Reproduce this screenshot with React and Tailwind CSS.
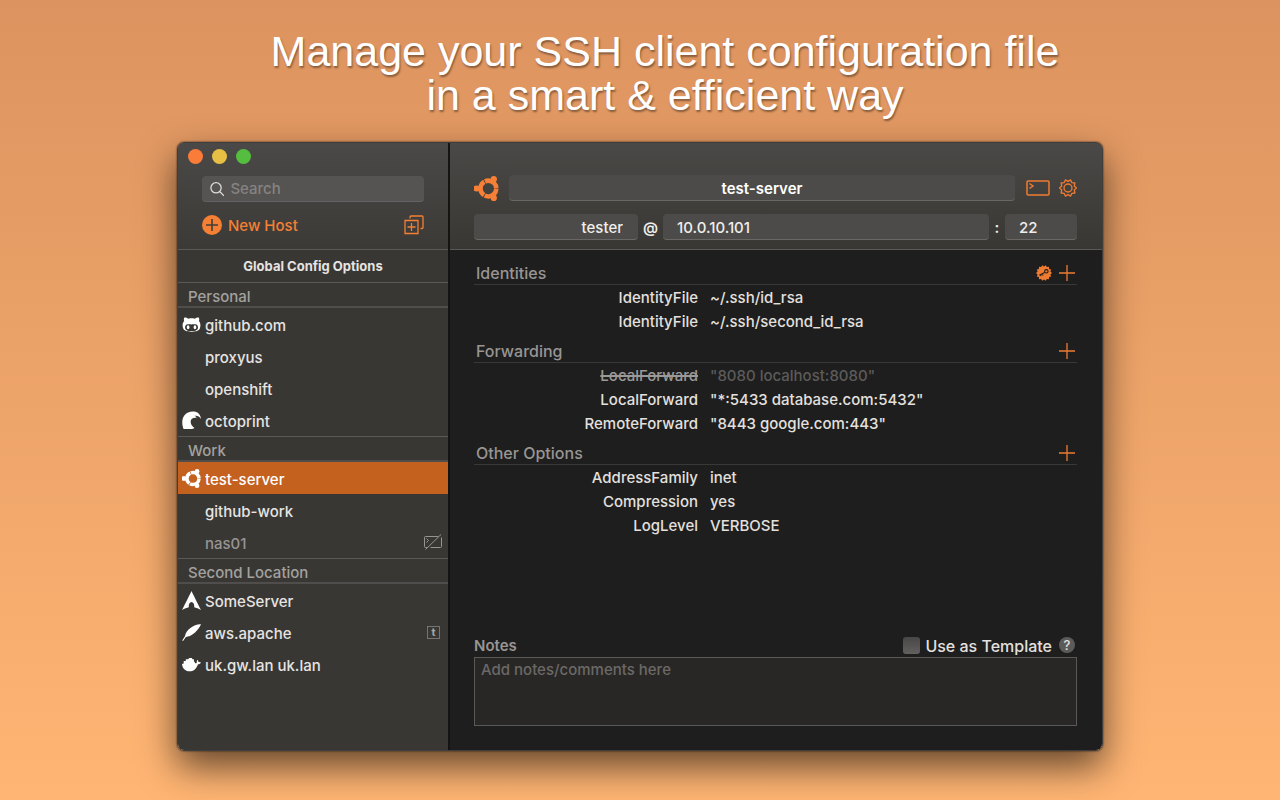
import React, { useState } from 'react';
import { FaGithubAlt } from 'react-icons/fa';

// Outline that alternates between an outer and an inner radius
function burst(points, outer, inner, c = 12) {
  const step = Math.PI / points;
  return Array.from({ length: points * 2 }, (_, i) => {
    const r = i % 2 ? inner : outer;
    return `${(c + r * Math.cos(i * step)).toFixed(2)},${(c + r * Math.sin(i * step)).toFixed(2)}`;
  }).join(' ');
}

function UbuntuIcon({ className }) {
  return (
    <svg viewBox="0 0 24 24" className={className} aria-hidden="true">
      <circle cx="13.8" cy="12" r="7.6" fill="none" stroke="currentColor" strokeWidth="4.4" strokeDasharray="15.1 .817" strokeDashoffset="-.4" />
      <path d="M0 9.600h5v4.800H0z" fill="currentColor" />
      <circle cx="2.600" cy="12" r="2.900" fill="currentColor" />
      <circle cx="19" cy="3" r="3" fill="currentColor" />
      <circle cx="19" cy="21" r="3" fill="currentColor" />
    </svg>
  );
}

function WaveIcon({ className }) {
  return (
    <svg viewBox="0 0 18 18" className={className} aria-hidden="true">
      <path fill="currentColor" d="M1.500 17C-.3 13-.2 7.600 2 4.500 4.300 1.200 8 .2 11.500.5 15 .9 17.600 3.200 18 7.500c-1.500-2.600-4-3.500-6.200-2.900 1 .4 1.700 1 2.100 1.900-3-.6-5.500.5-5.700 3.200-.1 2.600 1 4.900 3.600 6.300-1 .7-2 1-3.300 1z" />
    </svg>
  );
}

function ArchIcon({ className }) {
  return (
    <svg viewBox="0 0 18 18" className={className} aria-hidden="true">
      <path fill="currentColor" d="M9 0c2.200 4.500 5.600 11.500 9 18-2.500-1.400-4.600-2.200-6.400-2.600.2-2.900-.8-4.900-2.600-4.900s-2.800 2-2.600 4.900C4.600 15.800 2.500 16.600 0 18 3.400 11.500 6.800 4.500 9 0z" />
    </svg>
  );
}

function FeatherIcon({ className }) {
  return (
    <svg viewBox="0 0 18 18" className={className} aria-hidden="true">
      <path fill="currentColor" d="M18 1.300C14.800 1 11 2.400 8 4.700 5 7 3.300 9.500 2.900 12.200L.2 16.600l.8.4 2.700-3.700c2.500-.2 5-1.300 7.100-3l1.600-1.400c1.200-1 2.300-2.200 3.100-3.400C16.600 4.200 17.500 2.800 18 1.300z" />
    </svg>
  );
}

function WhaleIcon({ className }) {
  return (
    <svg viewBox="0 0 18 14" className={className} aria-hidden="true">
      <path fill="currentColor" d="M0 6.500 1.600 6V3.700h2V2h2.200L7 .8h2.300L10 2h1.300v1.900c.7.5 1 1.200 1.200 1.900 1 .1 1.600-.2 1.500-1.200-.1-.9.1-1.600.7-2.200.6.8.9 1.500.9 2.200.9-.2 1.600 0 2.400.5-.5 1.200-1.500 1.700-2.900 1.700C13.900 10.700 11.500 13.500 7.500 13.500 3.500 13.500.4 11 0 6.500z" />
    </svg>
  );
}

function GearIcon({ className }) {
  return (
    <svg viewBox="0 0 24 24" className={className} fill="none" stroke="currentColor" strokeWidth="1.800" aria-hidden="true">
      <polygon points={burst(10, 11.300, 8.800)} strokeLinejoin="round" />
      <circle cx="12" cy="12" r="5.300" />
    </svg>
  );
}

function KeyBadgeIcon({ className }) {
  return (
    <svg viewBox="0 0 24 24" className={className} aria-hidden="true">
      <polygon points={burst(14, 12, 9.800)} fill="currentColor" />
      <g fill="none" stroke="#1e1e1e" strokeWidth="1.600">
        <circle cx="15.500" cy="9.500" r="2.600" />
        <path d="m13 11.200-8 4.300M9.500 13.300l1.200 2.400M6.800 14.700l1 2" />
      </g>
    </svg>
  );
}

function TerminalIcon({ className }) {
  return (
    <svg viewBox="0 0 24 18" className={className} fill="none" stroke="currentColor" strokeWidth="1.500" aria-hidden="true">
      <rect x="1" y="2" width="22" height="14" rx="1" />
      <path d="m3.500 4.500 3.500 2.500-3.500 2.500" />
    </svg>
  );
}

function NoTerminalIcon({ className }) {
  return (
    <svg viewBox="0 0 18 16" className={className} fill="none" stroke="currentColor" aria-hidden="true">
      <path d="M4 13.500H1.500a1 1 0 0 1-1-1v-9a1 1 0 0 1 1-1H14M6.500 13.500h10a1 1 0 0 0 1-1v-9M2.500 4.500l2 2-2 2M1.500 15.500l15.500-15" />
    </svg>
  );
}

function DuplicateIcon({ className }) {
  return (
    <svg viewBox="0 0 20 20" className={className} fill="none" stroke="currentColor" strokeWidth="1.300" aria-hidden="true">
      <path d="M1 5.500h13v13H1zM7.500 8v8M3.500 12h8M6 3.500V2a1 1 0 0 1 1-1h11a1 1 0 0 1 1 1v10.500a1 1 0 0 1-1 1h-1.500" />
    </svg>
  );
}

function PlusIcon({ className }) {
  return (
    <svg viewBox="0 0 16 16" className={className} stroke="currentColor" strokeWidth="1.300" aria-hidden="true">
      <path d="M8 0v16M0 8h16" />
    </svg>
  );
}

const GROUPS = [
  {
    name: 'Personal',
    hosts: [
      { name: 'github.com', icon: FaGithubAlt },
      { name: 'proxyus' },
      { name: 'openshift' },
      { name: 'octoprint', icon: WaveIcon },
    ],
  },
  {
    name: 'Work',
    hosts: [
      { name: 'test-server', icon: UbuntuIcon },
      { name: 'github-work' },
      { name: 'nas01', disabled: true },
    ],
  },
  {
    name: 'Second Location',
    hosts: [
      { name: 'SomeServer', icon: ArchIcon },
      { name: 'aws.apache', icon: FeatherIcon, template: true },
      { name: 'uk.gw.lan uk.lan', icon: WhaleIcon },
    ],
  },
];

const SECTIONS = [
  {
    title: 'Identities',
    keygen: true,
    options: [
      ['IdentityFile', '~/.ssh/id_rsa'],
      ['IdentityFile', '~/.ssh/second_id_rsa'],
    ],
  },
  {
    title: 'Forwarding',
    options: [
      ['LocalForward', '"8080 localhost:8080"', true],
      ['LocalForward', '"*:5433 database.com:5432"'],
      ['RemoteForward', '"8443 google.com:443"'],
    ],
  },
  {
    title: 'Other Options',
    options: [
      ['AddressFamily', 'inet'],
      ['Compression', 'yes'],
      ['LogLevel', 'VERBOSE'],
    ],
  },
];

const fieldClass =
  'h-[26px] min-w-0 rounded-[4px] border-b border-[#6a6864] bg-[#4d4b49] pt-[2px] text-[#f0eeec] outline-none';

function HostRow({ host, selected, onSelect }) {
  const Icon = host.icon;
  return (
    <li>
      <button
        type="button"
        onClick={onSelect}
        className={`flex h-8 w-full items-center gap-1 pl-1 pr-[6px] text-left font-medium ${
          selected ? 'bg-[#c4611f] text-white' : host.disabled ? 'text-[#979593]' : 'text-[#e6e4e2]'
        }`}
      >
        <span className="flex w-[19px] shrink-0 justify-center text-white">
          {Icon && <Icon className="h-[19px] w-[19px]" />}
        </span>
        <span className="flex-1 truncate pt-[3px]">{host.name}</span>
        {host.disabled && <NoTerminalIcon className="h-4 w-[18px] text-[#979593]" />}
        {host.template && (
          <span className="mr-[2px] flex h-[13px] w-[13px] items-center justify-center border border-[#777573] text-[11px] font-bold leading-none text-[#aaa8a6]">
            t
          </span>
        )}
      </button>
    </li>
  );
}

function Sidebar({ selected, onSelect }) {
  const [search, setSearch] = useState('');

  return (
    <aside className="flex w-[272px] shrink-0 flex-col border-r-2 border-[#141413] bg-[#393733]">
      <div className="flex h-[107px] flex-col border-b border-[#5b5957] bg-linear-to-b from-[#4a4947] to-[#3c3a37]">
        <div className="flex gap-[9px] px-[10px] pt-[6px]">
          <button type="button" aria-label="Close" className="h-[15px] w-[15px] rounded-full bg-[#fb7c38]" />
          <button type="button" aria-label="Minimize" className="h-[15px] w-[15px] rounded-full bg-[#e6bf45]" />
          <button type="button" aria-label="Zoom" className="h-[15px] w-[15px] rounded-full bg-[#55bd3f]" />
        </div>
        <label className="mx-6 mt-[12px] flex h-[26px] items-center gap-[6px] rounded-[4px] border-b border-[#646260] bg-[#555452] px-2">
          <svg viewBox="0 0 16 16" className="h-4 w-4 text-[#dddbd9]" fill="none" stroke="currentColor" strokeWidth="1.400" aria-hidden="true">
            <circle cx="6.700" cy="6.700" r="5.700" />
            <path d="m11 11 4.500 4.500" />
          </svg>
          <input
            type="search"
            aria-label="Search"
            placeholder="Search"
            value={search}
            onChange={(e) => setSearch(e.target.value)}
            className="w-full min-w-0 bg-transparent font-medium text-[#e6e4e2] outline-none placeholder:text-[#858381]"
          />
        </label>
        <div className="mx-6 mt-3 flex items-center justify-between text-[#f58033]">
          <button type="button" className="flex items-center gap-[6px] font-medium">
            <svg viewBox="0 0 20 20" className="h-5 w-5" aria-hidden="true">
              <circle cx="10" cy="10" r="10" fill="currentColor" />
              <path d="M10 4v12M4 10h12" stroke="#403e3b" strokeWidth="1.600" />
            </svg>
            <span className="pt-[2px]">New Host</span>
          </button>
          <button type="button" aria-label="Duplicate host">
            <DuplicateIcon className="h-5 w-5" />
          </button>
        </div>
      </div>
      <button type="button" className="h-8 text-[13px] font-bold text-[#e6e4e2]">
        Global Config Options
      </button>
      {GROUPS.map((group) => (
        <section key={group.name}>
          <h2 className="h-[26px] border-b-2 border-t border-b-[#504e4c] border-t-[#5b5957] pl-[10px] pt-1 font-medium leading-5 text-[#a3a19f]">
            {group.name}
          </h2>
          <ul>
            {group.hosts.map((host) => (
              <HostRow
                key={host.name}
                host={host}
                selected={host.name === selected}
                onSelect={() => onSelect(host.name)}
              />
            ))}
          </ul>
        </section>
      ))}
    </aside>
  );
}

function OptionSection({ section }) {
  return (
    <section className="mb-[6px]">
      <div className="flex h-6 items-center justify-between border-b border-[#393837] px-[2px]">
        <h3 className="text-base font-medium text-[#989593]">{section.title}</h3>
        <div className="flex items-center gap-[7px] text-[#ee7b32]">
          {section.keygen && (
            <button type="button" aria-label="Generate key">
              <KeyBadgeIcon className="h-4 w-4" />
            </button>
          )}
          <button type="button" aria-label={`Add to ${section.title}`}>
            <PlusIcon className="h-4 w-4" />
          </button>
        </div>
      </div>
      <dl>
        {section.options.map(([key, value, off]) => (
          <div key={key + value} className="flex h-6 items-center gap-3 pt-[2px] font-medium text-[#e3e0de]">
            <dt className={`w-[224px] shrink-0 text-right ${off ? 'text-[#9b9997] line-through decoration-2' : ''}`}>{key}</dt>
            <dd className={off ? 'text-[#5c5b5a]' : ''}>{value}</dd>
          </div>
        ))}
      </dl>
    </section>
  );
}

function HostEditor({ name }) {
  const [user, setUser] = useState('tester');
  const [address, setAddress] = useState('10.0.10.101');
  const [port, setPort] = useState('22');
  const [notes, setNotes] = useState('');
  const [template, setTemplate] = useState(false);

  return (
    <main className="flex min-w-0 flex-1 flex-col bg-[#1e1e1e]">
      <header className="flex h-[107px] flex-col gap-[13px] border-b border-[#5b5957] bg-linear-to-b from-[#4a4947] to-[#393733] pl-6 pr-[25px] pt-8">
        <div className="flex items-center">
          <UbuntuIcon className="h-[25px] w-[25px] shrink-0 text-[#f77f36]" />
          <input
            aria-label="Host name"
            readOnly
            value={name}
            className={`${fieldClass} ml-[10px] flex-1 text-center font-semibold text-white`}
          />
          <button type="button" aria-label="Open terminal" className="ml-[11px] text-[#ee7b32]">
            <TerminalIcon className="h-[18px] w-6" />
          </button>
          <button type="button" aria-label="Settings" className="ml-[9px] text-[#ee7b32]">
            <GearIcon className="h-[18px] w-[18px]" />
          </button>
        </div>
        <div className="flex items-center font-medium text-[#f0eeec]">
          <input
            aria-label="User"
            value={user}
            onChange={(e) => setUser(e.target.value)}
            className={`${fieldClass} w-[164px] pr-[15px] text-right`}
          />
          <span className="w-[25px] pt-[2px] text-center font-semibold">@</span>
          <input
            aria-label="Address"
            value={address}
            onChange={(e) => setAddress(e.target.value)}
            className={`${fieldClass} flex-1 px-[14px]`}
          />
          <span className="w-4 pt-[2px] text-center font-semibold">:</span>
          <input
            aria-label="Port"
            value={port}
            onChange={(e) => setPort(e.target.value)}
            className={`${fieldClass} w-[72px] px-[14px]`}
          />
        </div>
      </header>

      <div className="flex flex-1 flex-col pb-6 pl-6 pr-[25px] pt-[11px]">
        {SECTIONS.map((section) => (
          <OptionSection key={section.title} section={section} />
        ))}
        <div className="mt-auto flex h-6 items-center font-medium">
          <label htmlFor="notes" className="pt-[2px] font-semibold text-[#989593]">
            Notes
          </label>
          <label className="ml-auto flex items-center gap-[5px] text-[#e3e0de]">
            <input
              type="checkbox"
              checked={template}
              onChange={(e) => setTemplate(e.target.checked)}
              className="h-[17px] w-[17px] appearance-none rounded-[3px] bg-linear-to-b from-[#484746] to-[#626160] checked:from-[#f58033] checked:to-[#c4611f]"
            />
            <span className="pt-[2px] text-base leading-5">Use as Template</span>
          </label>
          <button
            type="button"
            aria-label="Help"
            className="ml-[7px] mr-[2px] h-4 w-4 rounded-full bg-[#5c5b5a] text-[13px] leading-4 text-[#e3e0de]"
          >
            ?
          </button>
        </div>
        <textarea
          id="notes"
          placeholder="Add notes/comments here"
          value={notes}
          onChange={(e) => setNotes(e.target.value)}
          className="h-[69px] resize-none border border-[#5b5957] bg-[#282725] px-[6px] py-[2px] font-medium leading-5 text-[#e3e0de] outline-none placeholder:text-[#6b6967]"
        />
      </div>
    </main>
  );
}

export default function App() {
  const [selected, setSelected] = useState('test-server');

  return (
    <div className="flex min-h-screen flex-col bg-linear-to-b from-[#dc935f] to-[#ffb573] px-4 pb-[49px] pt-[29px] font-['Inter',sans-serif] text-[15px] leading-5">
      <h1 className="mb-[25px] pl-[50px] text-center font-['Liberation_Sans',sans-serif] text-[43px] leading-[44px] text-white [text-shadow:1px_2px_2px_rgba(0,0,0,0.4)]">
        Manage your SSH client configuration file
        <br />
        in a smart &amp; efficient way
      </h1>
      <div className="mx-auto flex w-full max-w-[926px] flex-1 overflow-hidden rounded-[7px] border border-[#3f3e3d] shadow-[0_16px_36px_rgba(0,0,0,0.6),0_0_2px_rgba(0,0,0,0.8)]">
        <Sidebar selected={selected} onSelect={setSelected} />
        <HostEditor name={selected} />
      </div>
    </div>
  );
}
